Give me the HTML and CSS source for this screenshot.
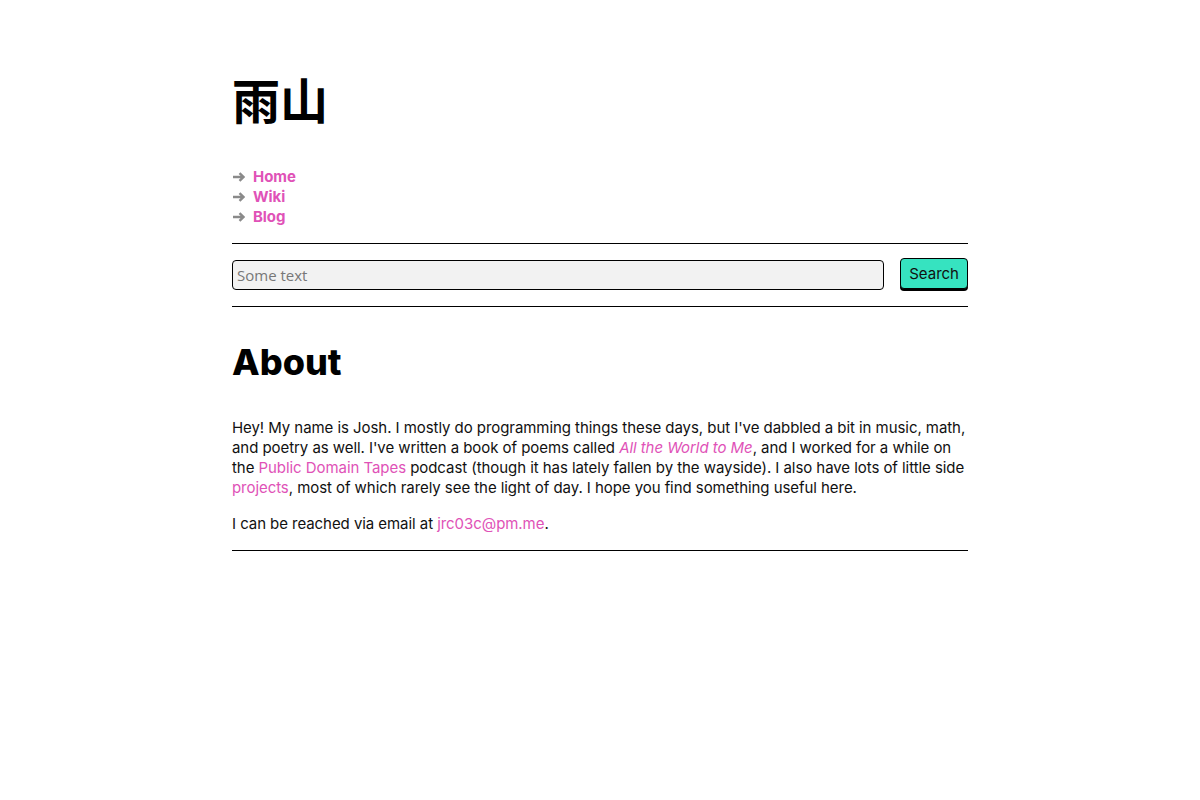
FILE: index.html
```html
<!DOCTYPE html>
<html lang="en">
<head>
<meta charset="utf-8">
<title>雨山</title>
<link rel="stylesheet" href="styles.css">
</head>
<body>
<div class="page">
  <header class="site-header">
    <h1 class="site-title">雨山</h1>
    <ul class="nav">
      <li><svg class="arrow" viewBox="0 0 12 10" width="12" height="10" aria-hidden="true"><path d="M0 5H10M6.5 1.2L10.5 5L6.5 8.8" fill="none" stroke="#8a8a8a" stroke-width="2.4"/></svg><a href="#">Home</a></li>
      <li><svg class="arrow" viewBox="0 0 12 10" width="12" height="10" aria-hidden="true"><path d="M0 5H10M6.5 1.2L10.5 5L6.5 8.8" fill="none" stroke="#8a8a8a" stroke-width="2.4"/></svg><a href="#">Wiki</a></li>
      <li><svg class="arrow" viewBox="0 0 12 10" width="12" height="10" aria-hidden="true"><path d="M0 5H10M6.5 1.2L10.5 5L6.5 8.8" fill="none" stroke="#8a8a8a" stroke-width="2.4"/></svg><a href="#">Blog</a></li>
    </ul>
  </header>
  <hr class="rule rule-top">
  <form class="search">
    <input class="search-input" type="text" placeholder="Some text">
    <button class="search-btn" type="button">Search</button>
  </form>
  <hr class="rule">
  <main class="content">
    <h2 class="heading">About</h2>
    <p>Hey! My name is Josh. I mostly do programming things these days, but I've dabbled a bit in music, math, and poetry as well. I've written a book of poems called <a href="#"><em>All the World to Me</em></a>, and I worked for a while on the <a href="#">Public Domain Tapes</a> podcast (though it has lately fallen by the wayside). I also have lots of little side <a href="#">projects</a>, most of which rarely see the light of day. I hope you find something useful here.</p>
    <p>I can be reached via email at <a href="#">jrc03c@pm.me</a>.</p>
  </main>
  <hr class="rule">
</div>
</body>
</html>
```

FILE: styles.css
```css
html, body {
  margin: 0;
  padding: 0;
  background: #ffffff;
}
body {
  font-family: "Inter", "Noto Sans", sans-serif;
  font-size: 15px;
  line-height: 20px;
  letter-spacing: -0.06px;
  color: #111111;
}
.page {
  width: 736px;
  margin: 0 auto;
  padding-top: 66px;
}
.site-title {
  margin: 0;
  font-family: "Noto Sans CJK SC", "Noto Sans CJK JP", sans-serif;
  font-size: 48px;
  line-height: 64px;
  font-weight: 700;
  letter-spacing: 0;
  color: #000;
}
.nav {
  list-style: none;
  margin: 37px 0 0 0;
  padding: 0;
}
.nav li {
  display: flex;
  align-items: center;
  gap: 8px;
  height: 20px;
}
.arrow {
  display: block;
  flex: none;
  margin-left: 1px;
}
.nav a {
  color: #e052b7;
  font-weight: 700;
  text-decoration: none;
}
.rule {
  border: 0;
  border-top: 1px solid #000;
  margin: 16px 0;
  height: 0;
}
.rule-top {
  margin-bottom: 14px;
}
.search {
  display: flex;
  align-items: flex-start;
  gap: 16px;
}
.search-input {
  flex: 1;
  height: 30px;
  box-sizing: border-box;
  border: 1px solid #000;
  border-radius: 4px;
  background: #f2f2f2;
  padding: 0 4px;
  font-family: "Open Sans", sans-serif;
  font-size: 15px;
  color: #333;
  margin: 2px 0 0 0;
}
.search-input::placeholder {
  color: #777;
}
.search-btn {
  height: 31px;
  box-sizing: border-box;
  padding: 0 8px;
  border: 1px solid #000;
  border-radius: 4px;
  background: #36e3c0;
  box-shadow: 0 2px 0 #000;
  font-family: "Inter", sans-serif;
  font-size: 15px;
  color: #111;
  margin: 0;
}
.content {
  padding-top: 13px;
}
.heading {
  margin: 0 0 30px 0;
  font-size: 36px;
  line-height: 52px;
  font-weight: 800;
  letter-spacing: 0;
  color: #000;
}
.content p {
  margin: 0 0 16px 0;
}
.content a {
  color: #e052b7;
  text-decoration: none;
}
```
